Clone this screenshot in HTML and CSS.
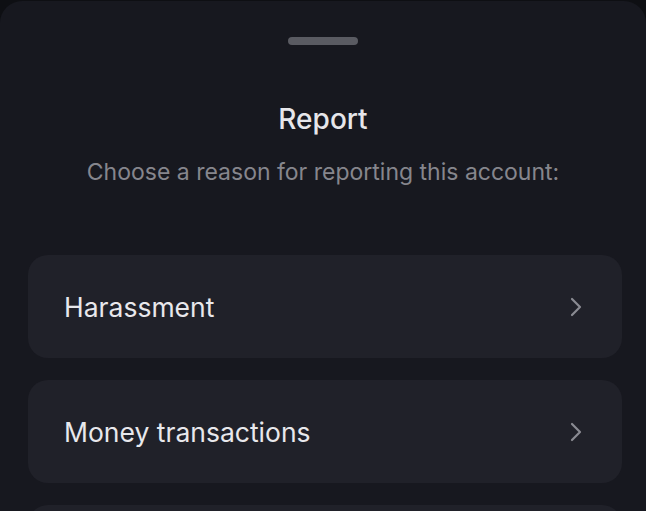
FILE: index.html
```html
<!DOCTYPE html>
<html lang="en">

<head>
    <meta charset="UTF-8">
    <meta name="viewport" content="width=device-width, initial-scale=1.0">
    <title>Report</title>
    <link rel="stylesheet" href="styles.css">
</head>

<body>
    <div class="sheet">
        <div class="handle"></div>
        <h1 class="sheet-title">Report</h1>
        <p class="sheet-subtitle">Choose a reason for reporting this account:</p>

        <div class="reason-list">
            <button class="reason">
                <span>Harassment</span>
                <svg class="chevron" viewBox="0 0 12 20">
                    <path d="M2 2l8 8-8 8"></path>
                </svg>
            </button>
            <button class="reason">
                <span>Money transactions</span>
                <svg class="chevron" viewBox="0 0 12 20">
                    <path d="M2 2l8 8-8 8"></path>
                </svg>
            </button>
            <!-- next item is below the fold -->
            <button class="reason" aria-label="More reasons"></button>
        </div>
    </div>
</body>

</html>
```

FILE: styles.css
```css
body {
    margin: 0;
    padding: 0;
    font-family: Inter, "Noto Sans", sans-serif;
    background: #0e0f13;
    height: 100vh;
    overflow: hidden;
}

.sheet {
    margin-top: 1px;
    min-height: 100%;
    background: #17181f;
    border-radius: 22px 22px 0 0;
    padding-top: 36px;
    text-align: center;
}

.handle {
    width: 70px;
    height: 8px;
    margin: 0 auto;
    border-radius: 4px;
    background: #5a5b62;
}

.sheet-title {
    margin: 57px 0 0;
    font-size: 28px;
    font-weight: 500;
    line-height: 34px;
    color: #e6e6ea;
}

.sheet-subtitle {
    margin: 22px 0 0;
    font-size: 23px;
    font-weight: 400;
    line-height: 28px;
    color: #86868d;
}

.reason-list {
    display: flex;
    flex-direction: column;
    gap: 22px;
    padding: 0 24px 0 28px;
    margin-top: 69px;
}

.reason {
    display: flex;
    justify-content: space-between;
    align-items: center;
    height: 103px;
    padding: 0 40px 0 36px;
    border: none;
    border-radius: 20px;
    background: #202129;
    font-family: inherit;
    font-size: 26.5px;
    font-weight: 400;
    color: #e8e8ec;
    cursor: pointer;
}

.chevron {
    width: 12px;
    height: 20px;
    fill: none;
    stroke: #8a8b92;
    stroke-width: 2.2;
    stroke-linecap: round;
    stroke-linejoin: round;
}
```
